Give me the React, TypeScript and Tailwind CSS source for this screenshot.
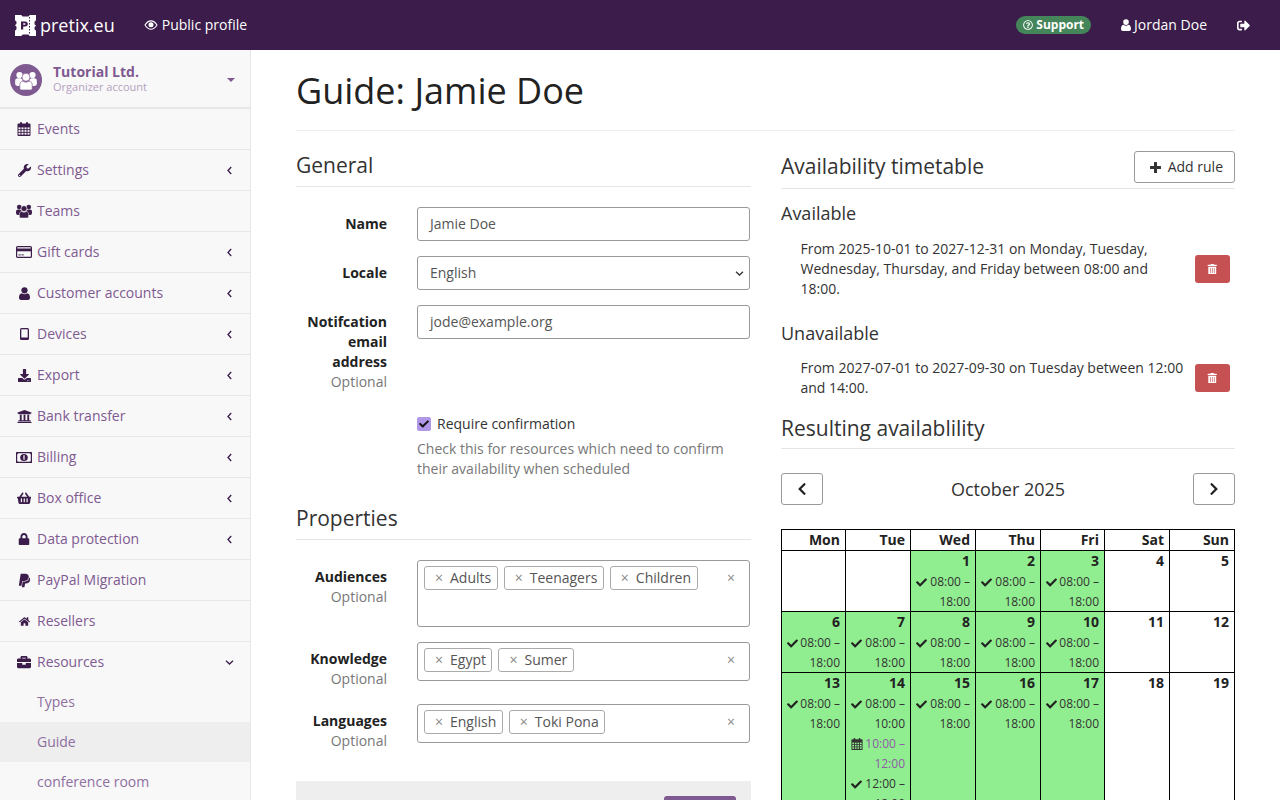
import React from "react";
import {
  FaWrench, FaDownload, FaUniversity, FaShoppingBasket, FaLock, FaPaypal, FaHome, FaBriefcase, FaSignOutAlt,
  FaRegQuestionCircle, FaTrashAlt, FaChevronLeft, FaChevronRight, FaCheck,
} from "react-icons/fa";

const font = "font-['Open_Sans',sans-serif]";
const DARK = "#3b1c4a";

function Logo() {
  return (
    <svg width="21" height="21" viewBox="0 0 21 21" className="shrink-0">
      <path fill="#fff" d="M0 0h6.500c.3 1 1 1.500 2 1.500h4c1 0 1.700-.5 2-1.500H21v5.500c-1 .3-1.500 1-1.500 2v1c0 1 .5 1.700 1.500 2v.5c-1 .3-1.500 1-1.500 2v.5c0 1 .5 1.700 1.500 2V21h-6.500c-.3-1-1-1.500-2-1.500h-4c-1 0-1.700.5-2 1.500H0v-5.500c1-.3 1.500-1 1.500-2v-1c0-1-.5-1.700-1.500-2v-.5c1-.3 1.500-1 1.500-2v-.5c0-1-.5-1.700-1.500-2z" />
      <path fill={DARK} d="M6 6.500h4.200c1.700 0 2.600 1 2.600 2.400s-.9 2.500-2.600 2.500H8.200v3H6zM8.200 8.200v1.600h1.500c.6 0 .9-.3.9-.8s-.3-.8-.9-.8z" />
      <path stroke={DARK} strokeWidth="1" strokeDasharray="1.500 1.500" d="M14.500 2v17" />
    </svg>
  );
}

function CalendarIcon({ size = 14, bg = "#f8f8f8", color = DARK }: { size?: number; bg?: string; color?: string }) {
  const cells: React.ReactNode[] = [];
  [5.4, 8.1, 10.8].forEach((y) =>
    [1.5, 4.5, 7.500, 10.500].forEach((x) => cells.push(<rect key={`${x}-${y}`} x={x} y={y} width="2" height="1.800" fill={bg} />))
  );
  return (
    <svg width={size} height={size} viewBox="0 0 14 14" className="shrink-0">
      <rect x="0.500" y="1.500" width="13" height="12.500" rx="1" fill={color} />
      <rect x="3" y="0" width="2" height="3.500" rx="1" fill={color} />
      <rect x="9" y="0" width="2" height="3.500" rx="1" fill={color} />
      {cells}
    </svg>
  );
}

function UsersIcon({ width = 16, height = 14, color = DARK, gap = "#f8f8f8" }: { width?: number; height?: number; color?: string; gap?: string }) {
  return (
    <svg width={width} height={height} viewBox="0 0 16 14" className="shrink-0">
      <circle cx="3.200" cy="3" r="2.300" fill={color} />
      <circle cx="12.800" cy="3" r="2.300" fill={color} />
      <rect x="0" y="5.400" width="5.500" height="5.600" rx="2" fill={color} />
      <rect x="10.500" y="5.400" width="5.500" height="5.600" rx="2" fill={color} />
      <circle cx="8" cy="4.600" r="2.900" fill={color} stroke={gap} strokeWidth="0.500" />
      <path fill={color} stroke={gap} strokeWidth="0.500" d="M3.400 12.800v-2.300c0-2 1-3 2.400-3.100.6.500 1.400.8 2.200.8s1.600-.3 2.200-.8c1.400.1 2.400 1.100 2.400 3.100v2.300c0 .7-.5 1.200-1.200 1.200H4.600c-.7 0-1.200-.5-1.200-1.200z" />
    </svg>
  );
}

function UserIcon({ width = 11, height = 13, color = DARK }: { width?: number; height?: number; color?: string }) {
  return (
    <svg width={width} height={height} viewBox="0 0 11 13" className="shrink-0">
      <circle cx="5.500" cy="3.300" r="3.100" fill={color} />
      <path fill={color} d="M0 10.800c0-2.900 1-4.400 2.900-4.600.7.600 1.600 1 2.600 1s1.900-.4 2.600-1c1.900.2 2.900 1.700 2.900 4.600 0 1.300-.9 2.200-2 2.200H2c-1.100 0-2-.9-2-2.200z" />
    </svg>
  );
}

function CardIcon() {
  return (
    <svg width="16" height="12" viewBox="0 0 16 12" className="shrink-0">
      <rect x="0.600" y="0.600" width="14.800" height="10.800" rx="1" fill="none" stroke={DARK} strokeWidth="1.200" />
      <rect x="1" y="2.500" width="14" height="2.800" fill={DARK} />
      <rect x="2.500" y="8.400" width="2.200" height="1" fill={DARK} />
      <rect x="5.500" y="8.400" width="2.200" height="1" fill={DARK} />
    </svg>
  );
}

function TabletIcon() {
  return (
    <svg width="9" height="12" viewBox="0 0 9 12" className="shrink-0">
      <rect width="9" height="12" rx="1.500" fill={DARK} />
      <rect x="1.300" y="1.300" width="6.400" height="8.200" fill="#f8f8f8" />
    </svg>
  );
}

function MoneyIcon() {
  return (
    <svg width="16" height="11" viewBox="0 0 16 11" className="shrink-0">
      <rect width="16" height="11" rx="0.500" fill={DARK} />
      <rect x="1.200" y="1.200" width="13.600" height="8.600" rx="1.500" fill="#f8f8f8" />
      <ellipse cx="8" cy="5.500" rx="3.800" ry="3.600" fill={DARK} />
      <rect x="7.200" y="3.300" width="1.700" height="4.400" rx="0.800" fill="#f8f8f8" />
      <rect x="7.800" y="4" width="0.500" height="3" fill={DARK} />
    </svg>
  );
}

function EyeIcon() {
  return (
    <svg width="14" height="10" viewBox="0 0 16 12" className="shrink-0">
      <path fill="none" stroke="#fff" strokeWidth="1.300" d="M.8 6C3 2.500 5.500 1 8 1s5 1.500 7.200 5C13 9.500 10.500 11 8 11S3 9.500.8 6z" />
      <circle cx="8" cy="5.800" r="3" fill="#fff" />
    </svg>
  );
}

function PlusIcon() {
  return (
    <svg width="11" height="11" viewBox="0 0 11 11" className="shrink-0">
      <rect x="4" y="0" width="3" height="11" rx="0.500" fill="#333" />
      <rect x="0" y="4" width="11" height="3" rx="0.500" fill="#333" />
    </svg>
  );
}

function ChevLeft() {
  return (
    <svg width="5" height="9" viewBox="0 0 5 9" className="shrink-0">
      <path d="M4.200 1 1 4.500 4.200 8" fill="none" stroke={DARK} strokeWidth="1.300" />
    </svg>
  );
}

function ChevDown({ color = DARK }: { color?: string }) {
  return (
    <svg width="9" height="5" viewBox="0 0 9 5" className="shrink-0">
      <path d="M1 .8 4.500 4 8 .8" fill="none" stroke={color} strokeWidth="1.300" />
    </svg>
  );
}

type Item = { icon: React.ReactNode; label: string; chev?: boolean };
const items: Item[] = [
  { icon: <CalendarIcon />, label: "Events" },
  { icon: <FaWrench className="text-[13px]" />, label: "Settings", chev: true },
  { icon: <UsersIcon />, label: "Teams" },
  { icon: <CardIcon />, label: "Gift cards", chev: true },
  { icon: <UserIcon />, label: "Customer accounts", chev: true },
  { icon: <TabletIcon />, label: "Devices", chev: true },
  { icon: <FaDownload className="text-[13px]" />, label: "Export", chev: true },
  { icon: <FaUniversity className="text-[15px]" />, label: "Bank transfer", chev: true },
  { icon: <MoneyIcon />, label: "Billing", chev: true },
  { icon: <FaShoppingBasket className="text-[14.500px]" />, label: "Box office", chev: true },
  { icon: <FaLock className="text-[12px]" />, label: "Data protection", chev: true },
  { icon: <FaPaypal className="text-[15px]" />, label: "PayPal Migration" },
  { icon: <FaHome className="text-[11px]" />, label: "Resellers" },
];

function NavRow({ item }: { item: Item }) {
  return (
    <div className="flex h-[41px] items-center border-b border-[#e7e7e7] pr-[18px] pl-[16px] text-[#7f5a91]">
      <span className="flex w-[16px] justify-center text-[#3b1c4a]">{item.icon}</span>
      <span className="ml-[5px] flex-1">{item.label}</span>
      {item.chev && <ChevLeft />}
    </div>
  );
}

function Sidebar() {
  return (
    <aside className="w-[251px] shrink-0 border-r border-[#e7e7e7] bg-[#f8f8f8]">
      <div className="flex h-[59px] items-center border-b-[2px] border-[#e7e7e7] pt-[3px] pr-[15px] pl-[10px]">
        <div className="flex h-[32px] w-[32px] items-center justify-center rounded-full bg-[#7f5a91]">
          <UsersIcon width={22} height={19} color="#fff" gap="#7f5a91" />
        </div>
        <div className="ml-[11px] flex-1 pb-[4px]">
          <div className="text-[14px] leading-[17px] font-bold text-[#7f5a91]">Tutorial Ltd.</div>
          <div className="text-[11px] leading-[13px] text-[#b5a0c0]">Organizer account</div>
        </div>
        <svg width="8" height="4" viewBox="0 0 8 4" className="mb-[1px]"><path d="M0 0h8L4 4z" fill="#7f5a91" /></svg>
      </div>
      {items.map((i) => <NavRow key={i.label} item={i} />)}
      <div className="flex h-[40px] items-center pr-[16px] pl-[16px] text-[#7f5a91]">
        <span className="flex w-[16px] justify-center text-[#3b1c4a]"><FaBriefcase className="text-[14px]" /></span>
        <span className="ml-[5px] flex-1">Resources</span>
        <ChevDown />
      </div>
      <div className="flex h-[40px] items-center pl-[37px] text-[#8e6fa0]">Types</div>
      <div className="flex h-[40px] items-center bg-[#eeeeee] pl-[37px] text-[#8e6fa0]">Guide</div>
      <div className="flex h-[40px] items-center pl-[37px] text-[#8e6fa0]">conference room</div>
    </aside>
  );
}

function SectionTitle({ children, pb = "pb-[8px]" }: { children: React.ReactNode; pb?: string }) {
  return <h3 className={`border-b border-[#e5e5e5] text-[21px] leading-[25px] text-[#333] ${pb}`}>{children}</h3>;
}

function Label({ children, optional }: { children: React.ReactNode; optional?: boolean }) {
  return (
    <div className="w-[91px] shrink-0 pt-[7px] text-right">
      <div className="font-bold text-[#222]">{children}</div>
      {optional && <div className="text-[#777]">Optional</div>}
    </div>
  );
}

function Tag({ children }: { children: React.ReactNode }) {
  return (
    <span className="flex h-[24px] items-center rounded-[3px] border border-[#aaa] pr-[5.500px] pl-[10px] text-[#555]">
      <span className="mr-[7px] w-[8px] text-center text-[14px] text-[#888]">×</span>
      <span>{children}</span>
    </span>
  );
}

function TagField({ tags, tall }: { tags: string[]; tall?: boolean }) {
  return (
    <div className={`relative w-[333px] rounded-[3px] border border-[#999] px-[6px] pt-[5px] ${tall ? "h-[67px]" : "h-[39px]"}`}>
      <div className="flex gap-[6px]">{tags.map((t) => <Tag key={t}>{t}</Tag>)}</div>
      <span className="absolute top-[7px] right-[14px] text-[14px] text-[#888]">×</span>
    </div>
  );
}

function FormRow({ children }: { children: React.ReactNode }) {
  return <div className="flex gap-[30px]">{children}</div>;
}

function General() {
  const inputCls = "flex h-[34px] w-[333px] items-center rounded-[3px] border border-[#999] px-[12px] text-[#555]";
  return (
    <div className="w-[455px] shrink-0">
      <SectionTitle>General</SectionTitle>
      <div className="mt-[20px] flex flex-col gap-[15px]">
        <FormRow><Label>Name</Label><div className={inputCls}>Jamie Doe</div></FormRow>
        <FormRow>
          <Label>Locale</Label>
          <div className={`${inputCls} justify-between pr-[5px]`}>English<ChevDown color="#333" /></div>
        </FormRow>
        <FormRow><Label optional>Notifcation email address</Label><div className={inputCls}>jode@example.org</div></FormRow>
        <div className="pt-[7px] pl-[121px]">
          <div className="flex items-center">
            <span className="flex h-[14px] w-[14px] items-center justify-center rounded-[2px] bg-[#b197e8] text-[#111]"><FaCheck className="text-[10px]" /></span>
            <span className="ml-[6px] text-[#333]">Require confirmation</span>
          </div>
          <div className="mt-[5px] w-[320px] text-[#777]">Check this for resources which need to confirm their availability when scheduled</div>
        </div>
      </div>
      <div className="mt-[27px]"><SectionTitle>Properties</SectionTitle></div>
      <div className="mt-[20px] flex flex-col">
        <FormRow><Label optional>Audiences</Label><TagField tall tags={["Adults", "Teenagers", "Children"]} /></FormRow>
        <div className="mt-[15px]"><FormRow><Label optional>Knowledge</Label><TagField tags={["Egypt", "Sumer"]} /></FormRow></div>
        <div className="mt-[15px]"><FormRow><Label optional>Languages</Label><TagField tags={["English", "Toki Pona"]} /></FormRow></div>
      </div>
      <div className="mt-[30px] flex h-[60px] justify-end bg-[#eeeeee] pt-[15px] pr-[15px]">
        <div className="h-[34px] w-[72px] rounded-[3px] bg-[#7f5a91]" />
      </div>
    </div>
  );
}

function Rule({ text, h }: { text: string; h: string }) {
  return (
    <div className={`flex items-center ${h}`}>
      <p className="ml-[19.500px] w-[390px] text-[#333]">{text}</p>
      <button className="ml-[4.500px] flex h-[28px] w-[35px] items-center justify-center rounded-[3px] bg-[#c65152] text-white"><FaTrashAlt className="text-[10.500px]" /></button>
    </div>
  );
}

type Ev = { t: string; t2: string; cal?: boolean };
const std: Ev[] = [{ t: "08:00 –", t2: "18:00" }];
const week: (null | { d: number; ev?: Ev[] })[][] = [
  [null, null, { d: 1, ev: std }, { d: 2, ev: std }, { d: 3, ev: std }, { d: 4 }, { d: 5 }],
  [{ d: 6, ev: std }, { d: 7, ev: std }, { d: 8, ev: std }, { d: 9, ev: std }, { d: 10, ev: std }, { d: 11 }, { d: 12 }],
  [
    { d: 13, ev: std },
    { d: 14, ev: [{ t: "08:00 –", t2: "10:00" }, { t: "10:00 –", t2: "12:00", cal: true }, { t: "12:00 –", t2: "18:00" }] },
    { d: 15, ev: std }, { d: 16, ev: std }, { d: 17, ev: std }, { d: 18 }, { d: 19 },
  ],
];
const widths = ["w-[64px]", "w-[65px]", "w-[65px]", "w-[65px]", "w-[64px]", "w-[65px]", "w-[65px]"];

function Calendar() {
  return (
    <table className="w-[454px] table-fixed border-collapse border border-black text-right text-[#333]">
      <thead>
        <tr className="h-[21px]">
          {["Mon", "Tue", "Wed", "Thu", "Fri", "Sat", "Sun"].map((d, i) => (
            <th key={d} className={`border border-black px-[5px] py-0 text-right leading-[20px] font-bold text-[#222] ${widths[i]}`}>{d}</th>
          ))}
        </tr>
      </thead>
      <tbody>
        {week.map((row, r) => (
          <tr key={r}>
            {row.map((c, i) => (
              <td key={i} className={`border border-black px-[5px] py-0 align-top leading-[20px] ${c?.ev ? "bg-[#90ee90]" : ""}`}>
                {c && <div className="font-bold text-[#222]">{c.d}</div>}
                {c?.ev?.map((e, k) => (
                  <div key={k} className={`-mb-[1px] pt-[1px] text-[12px] ${e.cal ? "text-[#8e5ba6]" : "text-[#333]"}`}>
                    <div className="flex items-center justify-between whitespace-nowrap">
                      {e.cal ? <CalendarIcon size={12} bg="#90ee90" color="#333" /> : <FaCheck className="text-[11px] text-[#222]" />}
                      <span>{e.t}</span>
                    </div>
                    <div>{e.t2}</div>
                  </div>
                ))}
              </td>
            ))}
          </tr>
        ))}
      </tbody>
    </table>
  );
}

function Availability() {
  return (
    <div className="w-[454px] shrink-0">
      <div className="relative -mt-[1px] border-b border-[#e5e5e5] pt-[2px] pb-[9px]">
        <h3 className="text-[21px] leading-[25px] text-[#333]">Availability timetable</h3>
        <button className="absolute -top-[1px] right-0 flex h-[32px] w-[101px] items-center justify-end rounded-[3px] border border-[#999] pr-[11px] text-[#333]">
          <span className="mr-[7px]"><PlusIcon /></span>Add rule
        </button>
      </div>
      <h4 className="mt-[12px] text-[18px] leading-[24px] text-[#333]">Available</h4>
      <Rule h="h-[60px] mt-[14px]" text="From 2025-10-01 to 2027-12-31 on Monday, Tuesday, Wednesday, Thursday, and Friday between 08:00 and 18:00." />
      <h4 className="mt-[22px] text-[18px] leading-[24px] text-[#333]">Unavailable</h4>
      <Rule h="h-[40px] mt-[13px]" text="From 2027-07-01 to 2027-09-30 on Tuesday between 12:00 and 14:00." />
      <div className="mt-[18px]"><SectionTitle pb="pb-[7px]">Resulting availablility</SectionTitle></div>
      <div className="mt-[24px] flex h-[32px] items-center justify-between">
        <button className="flex h-[32px] w-[42px] items-center justify-center rounded-[3px] border border-[#999] text-[#222]"><FaChevronLeft className="text-[14px]" /></button>
        <span className="text-[18px] text-[#333]">October 2025</span>
        <button className="flex h-[32px] w-[42px] items-center justify-center rounded-[3px] border border-[#999] text-[#222]"><FaChevronRight className="text-[14px]" /></button>
      </div>
      <div className="mt-[24px]"><Calendar /></div>
    </div>
  );
}

export default function App() {
  return (
    <div className={`${font} flex h-[800px] flex-col overflow-hidden bg-white text-[14px] leading-[20px]`}>
      <header className="flex h-[50px] shrink-0 items-center bg-[#3b1c4a] text-white">
        <div className="ml-[15px] flex items-center">
          <Logo />
          <span className="ml-[4px] text-[18px]">pretix.eu</span>
        </div>
        <div className="ml-[29px] flex items-center"><span className="mr-[4px]"><EyeIcon /></span>Public profile</div>
        <div className="ml-auto flex h-[18px] items-center rounded-full bg-[#44855a] px-[7px] text-[12px] font-bold"><FaRegQuestionCircle className="mr-[3px] text-[10px]" />Support</div>
        <div className="ml-[30px] flex items-center"><span className="mr-[3px]"><UserIcon width={10} height={12} color="#fff" /></span>Jordan Doe</div>
        <div className="mr-[30px] ml-[30px]"><FaSignOutAlt className="text-[13px]" /></div>
      </header>
      <div className="flex min-h-0 flex-1">
        <Sidebar />
        <main className="ml-[45px] w-[939px]">
          <h1 className="mt-[21px] border-b border-[#eeeeee] pb-[19px] text-[36px] leading-[40px] text-[#222]">Guide: Jamie Doe</h1>
          <div className="mt-[22px] flex gap-[30px]">
            <General />
            <Availability />
          </div>
        </main>
      </div>
    </div>
  );
}
